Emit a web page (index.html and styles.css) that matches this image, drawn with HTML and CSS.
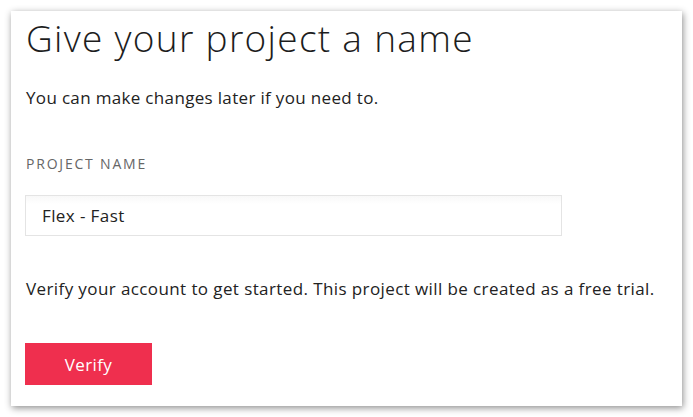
FILE: index.html
```html
<!DOCTYPE html>
<html>
<head>
<meta charset="utf-8">
<link rel="stylesheet" href="styles.css">
</head>
<body>
<div class="card">
  <h1 class="title">Give your project a name</h1>
  <p class="lead">You can make changes later if you need to.</p>
  <label class="label">PROJECT NAME</label>
  <div class="input">Flex - Fast</div>
  <p class="note">Verify your account to get started. This project will be created as a free trial.</p>
  <button class="btn">Verify</button>
</div>
</body>
</html>
```
FILE: styles.css
```css
html, body {
  margin: 0;
  padding: 0;
  background: #ffffff;
}
body {
  padding: 11px;
  font-family: "Open Sans", "Liberation Sans", sans-serif;
  color: #222;
}
.card {
  width: 671px;
  height: 395px;
  box-sizing: border-box;
  background: #fff;
  box-shadow: 1px 2px 7px rgba(0,0,0,0.45);
  padding: 5px 14px 0 14px;
  display: flex;
  flex-direction: column;
  align-items: flex-start;
}
.title {
  margin: 0 0 0 1px;
  font-size: 37px;
  font-weight: 300;
  line-height: 44px;
  color: #1d1d1d;
  letter-spacing: 1.3px;
}
.lead {
  margin: 27px 0 0 1px;
  font-size: 17px;
  line-height: 22px;
  letter-spacing: 0.33px;
}
.label {
  margin: 46px 0 0 1px;
  font-size: 14px;
  letter-spacing: 1.8px;
  color: #666;
  line-height: 18px;
}
.input {
  margin-top: 22px;
  width: 537px;
  height: 41px;
  box-sizing: border-box;
  border: 1px solid #e4e4e4;
  background: linear-gradient(#f8f8f8, #fff 8px);
  padding: 0 16px;
  font-size: 17px;
  line-height: 39px;
  letter-spacing: 0.4px;
  color: #222;
}
.note {
  margin: 42px 0 0 1px;
  font-size: 17px;
  line-height: 22px;
  letter-spacing: 0.4px;
}
.btn {
  margin-top: 43px;
  width: 127px;
  height: 42px;
  border: 0;
  background: #ef2f4e;
  color: #fff;
  font-family: "Open Sans", "Liberation Sans", sans-serif;
  font-size: 17px;
  letter-spacing: 0.4px;
  padding: 0;
}
```
